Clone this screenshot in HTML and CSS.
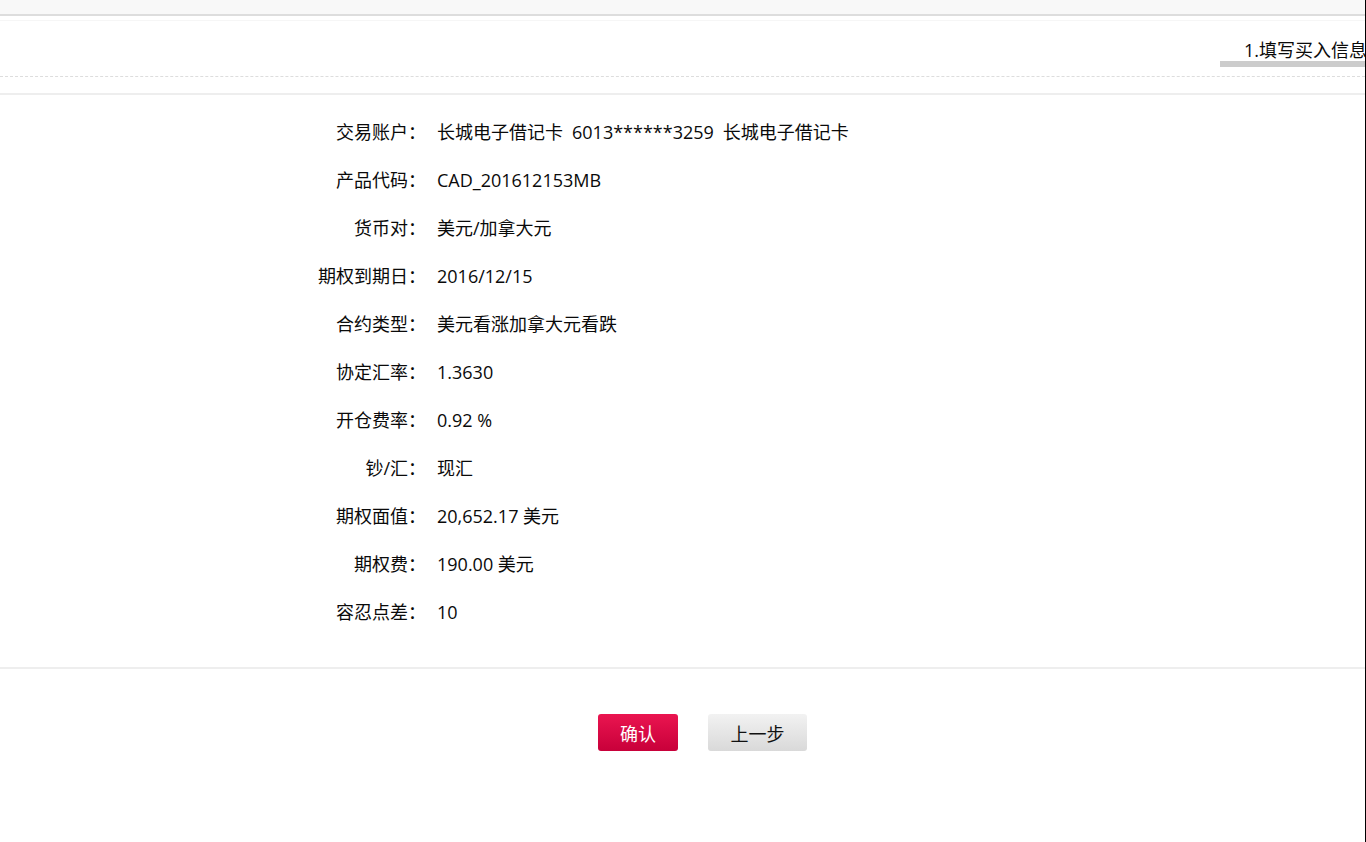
FILE: index.html
```html
<!DOCTYPE html>
<html lang="zh-CN">
<head>
    <meta charset="UTF-8">
    <title>期权买入确认</title>
    <link rel="stylesheet" href="styles.css">
</head>
<body>
    <div class="page">
        <div class="top-bar"></div>
        <div class="step-bar">
            <div class="step active">1.填写买入信息</div>
        </div>
        <div class="spacer"></div>

        <!-- 确认信息 -->
        <div class="info-list">
            <div class="info-row"><span class="label">交易账户：</span><span class="value">长城电子借记卡<span class="gap"></span>6013******3259<span class="gap"></span>长城电子借记卡</span></div>
            <div class="info-row"><span class="label">产品代码：</span><span class="value">CAD_201612153MB</span></div>
            <div class="info-row"><span class="label">货币对：</span><span class="value">美元/加拿大元</span></div>
            <div class="info-row"><span class="label">期权到期日：</span><span class="value">2016/12/15</span></div>
            <div class="info-row"><span class="label">合约类型：</span><span class="value">美元看涨加拿大元看跌</span></div>
            <div class="info-row"><span class="label">协定汇率：</span><span class="value">1.3630</span></div>
            <div class="info-row"><span class="label">开仓费率：</span><span class="value">0.92 %</span></div>
            <div class="info-row"><span class="label">钞/汇：</span><span class="value">现汇</span></div>
            <div class="info-row"><span class="label">期权面值：</span><span class="value">20,652.17 美元</span></div>
            <div class="info-row"><span class="label">期权费：</span><span class="value">190.00 美元</span></div>
            <div class="info-row"><span class="label">容忍点差：</span><span class="value">10</span></div>
        </div>

        <div class="actions">
            <button class="btn btn-primary">确认</button>
            <button class="btn btn-default">上一步</button>
        </div>
    </div>
</body>
</html>
```

FILE: styles.css
```css
html, body {
    margin: 0;
    padding: 0;
    background: #000000;
}

body {
    font-family: "Open Sans", "Noto Sans CJK SC", sans-serif;
    color: #0a0a0a;
    font-size: 18px;
}

.page {
    width: 1365px;
    height: 842px;
    background: #ffffff;
    overflow: hidden;
}

.top-bar {
    height: 14px;
    background: #f8f8f8;
    border-bottom: 2px solid #dddddd;
}

.step-bar {
    height: 57px;
    margin-top: 4px;
    border-top: 1px solid #f6f6f6;
    border-bottom: 1px dashed #dddddd;
    display: flex;
    justify-content: flex-end;
    align-items: flex-end;
    padding-bottom: 9px;
    box-sizing: border-box;
}

.step {
    width: 145px;
    padding-left: 24px;
    box-sizing: border-box;
    white-space: nowrap;
    overflow: hidden;
    line-height: 22px;
    border-bottom: 6px solid #cccccc;
}

.spacer {
    height: 16px;
    border-bottom: 2px solid #eeeeee;
}

.info-list {
    padding: 13px 0 31px 0;
    border-bottom: 2px solid #eeeeee;
}

.info-row {
    display: flex;
    height: 48px;
    line-height: 48px;
}

.info-row .label {
    width: 426px;
    text-align: right;
    white-space: nowrap;
}

.info-row .value {
    padding-left: 11px;
    white-space: nowrap;
}

.info-row .gap {
    display: inline-block;
    width: 9px;
}

.actions {
    display: flex;
    gap: 30px;
    padding: 45px 0 0 598px;
}

.btn {
    height: 37px;
    border: none;
    border-radius: 3px;
    font-family: "Noto Sans CJK SC", sans-serif;
    font-size: 18px;
    cursor: pointer;
    padding: 0;
}

.btn-primary {
    width: 80px;
    background: linear-gradient(#ea1550, #c8003a);
    color: #ffffff;
}

.btn-default {
    width: 99px;
    background: linear-gradient(#f2f2f2, #d9d9d9);
    color: #111111;
}
```
